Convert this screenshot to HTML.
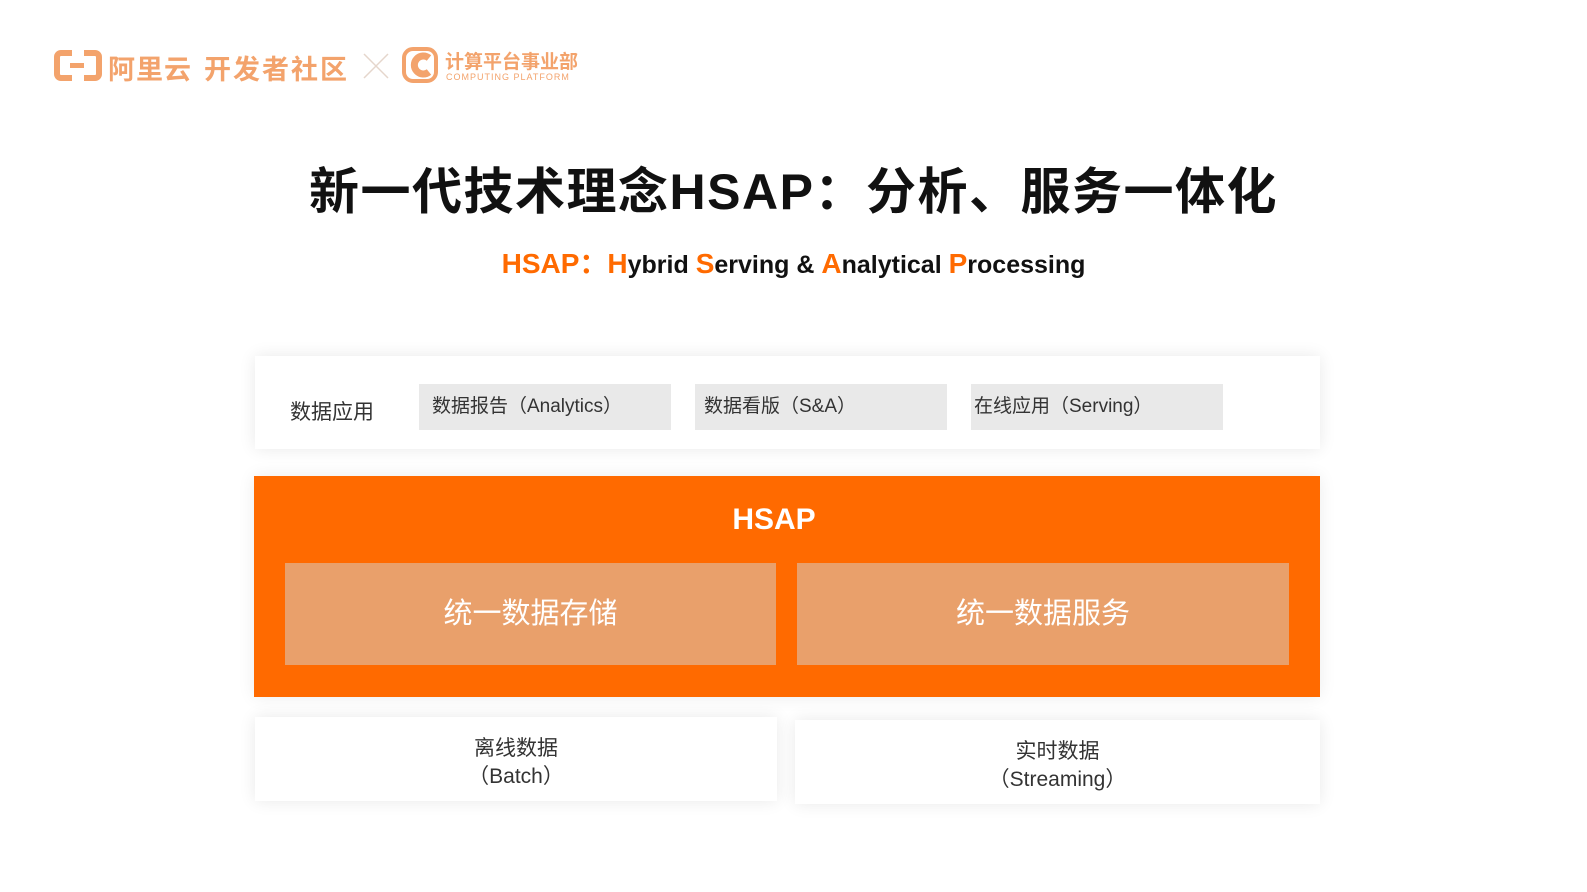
<!DOCTYPE html>
<html><head><meta charset="utf-8"><style>
*{margin:0;padding:0;box-sizing:border-box}
body{width:1587px;height:892px;background:#fff;position:relative;overflow:hidden;font-family:"Liberation Sans","Noto Sans CJK SC",sans-serif;color:#222}
.abs{position:absolute}
.logo{color:#f3a36c;font-weight:bold}
.card{background:#fff;box-shadow:0 0 16px rgba(0,0,0,0.09)}
.chip{background:#e9e9e9;font-size:19px;color:#333;line-height:46px;padding-left:13px}
.inner{background:#e9a06b;color:#fff;font-size:29px;text-align:center;line-height:102px}
.o{color:#ff6a00}
</style></head><body>
<!-- logo -->
<div class="abs" style="left:54px;top:50px;width:48px;height:31px;border:6px solid #f3a36c;border-radius:7px"></div>
<div class="abs" style="left:72px;top:44px;width:12px;height:43px;background:#fff"></div>
<div class="abs" style="left:70px;top:63px;width:14px;height:5px;background:#f3a36c"></div>
<div class="abs logo" style="left:108px;top:48px;font-size:27px;letter-spacing:1px">阿里云</div>
<div class="abs logo" style="left:204px;top:48px;font-size:27px;letter-spacing:2px">开发者社区</div>
<svg class="abs" style="left:362px;top:52px" width="28" height="28"><path d="M2 2L26 26M26 2L2 26" stroke="#e5d6cc" stroke-width="1.5"/></svg>
<svg class="abs" style="left:399px;top:44px" width="42" height="42"><rect x="5" y="5" width="32" height="32" rx="9" fill="none" stroke="#f3a36c" stroke-width="4"/><path d="M30 14a9 9 0 1 0 0 14" fill="none" stroke="#f3a36c" stroke-width="7"/></svg>
<div class="abs logo" style="left:445px;top:47px;font-size:19px">计算平台事业部</div>
<div class="abs" style="left:446px;top:72px;font-size:9px;color:#f3a36c;letter-spacing:1px">COMPUTING PLATFORM</div>

<div class="abs" style="left:0;width:1587px;top:152px;text-align:center;font-size:50px;font-weight:bold;color:#111;letter-spacing:1.5px">新一代技术理念HSAP：分析、服务一体化</div>
<div class="abs" style="left:0;width:1587px;top:242px;text-align:center;font-size:25px;font-weight:bold;color:#111"><span class="o" style="font-size:28px">HSAP：</span><span class="o" style="font-size:28px">H</span>ybrid <span class="o" style="font-size:28px">S</span>erving &amp; <span class="o" style="font-size:28px">A</span>nalytical <span class="o" style="font-size:28px">P</span>rocessing</div>

<div class="abs card" style="left:255px;top:356px;width:1065px;height:93px"></div>
<div class="abs" style="left:290px;top:396px;font-size:21px;color:#333">数据应用</div>
<div class="abs chip" style="left:419px;top:384px;width:252px">数据报告（Analytics）</div>
<div class="abs chip" style="left:695px;top:384px;width:252px;padding-left:9px">数据看版（S&amp;A）</div>
<div class="abs chip" style="left:971px;top:384px;width:252px;padding-left:3px">在线应用（Serving）</div>

<div class="abs" style="left:254px;top:476px;width:1066px;height:221px;background:#ff6a00;box-shadow:0 0 16px rgba(0,0,0,0.08)"></div>
<div class="abs" style="left:254px;width:1040px;top:503px;text-align:center;color:#fff;font-weight:bold;font-size:30px">HSAP</div>
<div class="abs inner" style="left:285px;top:563px;width:491px;height:102px">统一数据存储</div>
<div class="abs inner" style="left:797px;top:563px;width:492px;height:102px">统一数据服务</div>

<div class="abs card" style="left:255px;top:717px;width:522px;height:84px;text-align:center;font-size:21px;line-height:28px;padding-top:18px;color:#333">离线数据<br>（Batch）</div>
<div class="abs card" style="left:795px;top:720px;width:525px;height:84px;text-align:center;font-size:21px;line-height:28px;padding-top:18px;color:#333">实时数据<br>（Streaming）</div>
</body></html>
